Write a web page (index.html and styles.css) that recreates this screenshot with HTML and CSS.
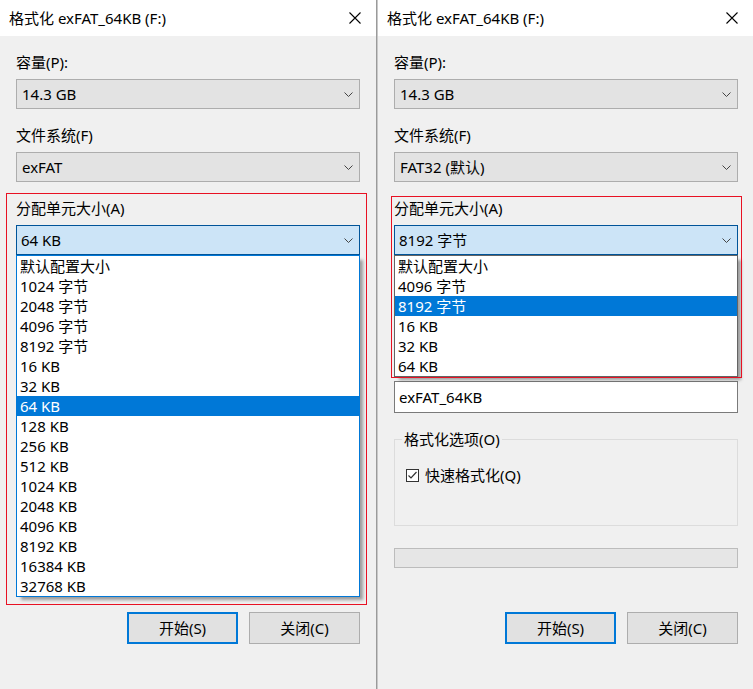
FILE: index.html
```html
<!DOCTYPE html>
<html lang="zh-CN">
<head>
<meta charset="utf-8">
<title>格式化 exFAT_64KB (F:)</title>
<link rel="stylesheet" href="styles.css">
</head>
<body>
<div class="screen">
  <section class="dialog">
    <header class="titlebar">
      <span class="title">格式化 exFAT_64KB (F:)</span>
      <svg class="close" width="12" height="12" viewBox="0 0 12 12"><path d="M0.5 0.5L11.5 11.5M11.5 0.5L0.5 11.5" stroke="#000" stroke-width="1.1" fill="none"/></svg>
    </header>
    <div class="body">
      <div class="field">
        <div class="label">容量(P):</div>
        <div class="select"><span>14.3 GB</span><svg class="chev" width="9" height="5" viewBox="0 0 9 5"><polyline points="0.5,0.5 4.5,4.5 8.5,0.5" fill="none" stroke="#444" stroke-width="1"/></svg></div>
      </div>
      <div class="field">
        <div class="label">文件系统(F)</div>
        <div class="select"><span>exFAT</span><svg class="chev" width="9" height="5" viewBox="0 0 9 5"><polyline points="0.5,0.5 4.5,4.5 8.5,0.5" fill="none" stroke="#444" stroke-width="1"/></svg></div>
      </div>
      <div class="field alloc">
        <div class="label">分配单元大小(A)</div>
        <div class="select focused"><span>64 KB</span><svg class="chev" width="9" height="5" viewBox="0 0 9 5"><polyline points="0.5,0.5 4.5,4.5 8.5,0.5" fill="none" stroke="#444" stroke-width="1"/></svg></div>
        <ul class="dropdown dropdown-blue">
          <li>默认配置大小</li>
          <li>1024 字节</li>
          <li>2048 字节</li>
          <li>4096 字节</li>
          <li>8192 字节</li>
          <li>16 KB</li>
          <li>32 KB</li>
          <li class="selected">64 KB</li>
          <li>128 KB</li>
          <li>256 KB</li>
          <li>512 KB</li>
          <li>1024 KB</li>
          <li>2048 KB</li>
          <li>4096 KB</li>
          <li>8192 KB</li>
          <li>16384 KB</li>
          <li>32768 KB</li>
        </ul>
      </div>
      <div class="covered">
        <button class="restore">还原设备的默认值(D)</button>
        <div class="field vol">
          <div class="label">卷标(L)</div>
          <div class="textbox">exFAT_64KB</div>
        </div>
        <fieldset class="options">
          <legend>格式化选项(O)</legend>
          <label class="check"><span class="box"><svg width="11" height="11" viewBox="0 0 11 11"><polyline points="1.5,5.5 4,8 9.5,2" fill="none" stroke="#333" stroke-width="1.2"/></svg></span>快速格式化(Q)</label>
        </fieldset>
        <div class="progress"></div>
      </div>
      <div class="actions">
        <button class="btn primary">开始(S)</button>
        <button class="btn">关闭(C)</button>
      </div>
    </div>
    <div class="annot annot-left"></div>
  </section>
  <div class="divider"></div>
  <section class="dialog">
    <header class="titlebar">
      <span class="title">格式化 exFAT_64KB (F:)</span>
      <svg class="close" width="12" height="12" viewBox="0 0 12 12"><path d="M0.5 0.5L11.5 11.5M11.5 0.5L0.5 11.5" stroke="#000" stroke-width="1.1" fill="none"/></svg>
    </header>
    <div class="body">
      <div class="field">
        <div class="label">容量(P):</div>
        <div class="select"><span>14.3 GB</span><svg class="chev" width="9" height="5" viewBox="0 0 9 5"><polyline points="0.5,0.5 4.5,4.5 8.5,0.5" fill="none" stroke="#444" stroke-width="1"/></svg></div>
      </div>
      <div class="field">
        <div class="label">文件系统(F)</div>
        <div class="select"><span>FAT32 (默认)</span><svg class="chev" width="9" height="5" viewBox="0 0 9 5"><polyline points="0.5,0.5 4.5,4.5 8.5,0.5" fill="none" stroke="#444" stroke-width="1"/></svg></div>
      </div>
      <div class="field alloc">
        <div class="label">分配单元大小(A)</div>
        <div class="select focused"><span>8192 字节</span><svg class="chev" width="9" height="5" viewBox="0 0 9 5"><polyline points="0.5,0.5 4.5,4.5 8.5,0.5" fill="none" stroke="#444" stroke-width="1"/></svg></div>
        <ul class="dropdown dropdown-gray">
          <li>默认配置大小</li>
          <li>4096 字节</li>
          <li class="selected">8192 字节</li>
          <li>16 KB</li>
          <li>32 KB</li>
          <li>64 KB</li>
        </ul>
      </div>
      <div>
        <button class="restore hidden">还原设备的默认值(D)</button>
        <div class="field vol">
          <div class="label hidden">卷标(L)</div>
          <div class="textbox">exFAT_64KB</div>
        </div>
        <fieldset class="options">
          <legend>格式化选项(O)</legend>
          <label class="check"><span class="box"><svg width="11" height="11" viewBox="0 0 11 11"><polyline points="1.5,5.5 4,8 9.5,2" fill="none" stroke="#333" stroke-width="1.2"/></svg></span>快速格式化(Q)</label>
        </fieldset>
        <div class="progress"></div>
      </div>
      <div class="actions">
        <button class="btn primary">开始(S)</button>
        <button class="btn">关闭(C)</button>
      </div>
    </div>
    <div class="annot annot-right"></div>
  </section>
</div>
</body>
</html>
```

FILE: styles.css
```css
* { box-sizing: border-box; }
html, body { margin: 0; padding: 0; }
body {
  width: 753px;
  height: 689px;
  overflow: hidden;
  background: #f0f0f0;
  font-family: "Noto Sans", "Noto Sans CJK SC", sans-serif;
  font-size: 15px;
  color: #000;
}
.screen {
  display: flex;
  height: 689px;
}
.dialog {
  position: relative;
  width: 376px;
  flex: none;
  height: 689px;
  background: #f0f0f0;
  overflow: hidden;
}
.dialog:last-child { width: 375px; }
.divider {
  width: 2px;
  flex: none;
  background: linear-gradient(to right, #9a9a9a 0 1px, #c8c8c8 1px 2px);
}
.titlebar {
  height: 36px;
  background: #fff;
  display: flex;
  align-items: center;
  justify-content: space-between;
  padding: 0 15px 0 9px;
}
.title { font-size: 15px; line-height: 20px; }
.close { display: block; }
.body {
  padding: 0 16px;
  width: 376px;
}
.dialog:last-child .body { width: 375px; padding-right: 15px; }
.field { margin-top: 16px; }
.alloc { position: relative; z-index: 2; }
.label {
  height: 20px;
  line-height: 20px;
  margin-bottom: 7px;
}
.select {
  height: 30px;
  border: 1px solid #adadad;
  background: #e3e3e3;
  display: flex;
  align-items: center;
  justify-content: space-between;
  padding: 0 6px 0 5px;
  line-height: 20px;
}
.select.focused {
  background: #cce4f7;
  border-color: #005499;
  padding-left: 4px;
}
.chev { display: block; margin-top: 1px; }
.dropdown {
  position: absolute;
  left: 0;
  right: 0;
  top: 100%;
  margin: 0;
  padding: 0;
  list-style: none;
  background: #fff;
  border: 1px solid #0078d7;
  box-shadow: 4px 4px 3px -1px rgba(0, 0, 0, 0.35);
}
.dropdown-gray { border-color: #646464; }
.dropdown li {
  height: 20px;
  line-height: 20px;
  padding-left: 3px;
  white-space: nowrap;
}
.dropdown li.selected {
  background: #0078d7;
  color: #fff;
}
.covered, .hidden { visibility: hidden; }
.restore {
  display: block;
  margin: 14px 0 0 auto;
  height: 30px;
  padding: 0 12px;
  font: inherit;
  background: #e1e1e1;
  border: 1px solid #adadad;
}
.vol { margin-top: 55px; }
.textbox {
  height: 32px;
  border: 1px solid #7a7a7a;
  background: #fff;
  line-height: 30px;
  padding-left: 4px;
}
.options {
  margin: 16px 0 0;
  padding: 0 0 0 10px;
  height: 97px;
  border: 1px solid #dcdcdc;
  min-width: 0;
}
.options legend {
  padding: 0 2px;
  margin-left: -3px;
  line-height: 20px;
  height: 20px;
}
.check {
  display: flex;
  align-items: center;
  margin-top: 16px;
  height: 20px;
  line-height: 20px;
}
.box {
  width: 13px;
  height: 13px;
  border: 1px solid #333;
  background: #fff;
  display: flex;
  align-items: center;
  justify-content: center;
  margin-right: 6px;
  margin-left: 1px;
}
.box svg { display: block; }
.progress {
  margin-top: 22px;
  height: 20px;
  border: 1px solid #bcbcbc;
  background: #e6e6e6;
}
.actions {
  display: flex;
  justify-content: flex-end;
  gap: 11px;
  margin-top: 44px;
}
.btn {
  width: 111px;
  height: 32px;
  font: inherit;
  color: #000;
  background: #e1e1e1;
  border: 1px solid #adadad;
  padding: 0;
  line-height: 20px;
}
.btn.primary { border: 2px solid #0078d7; }
.annot {
  position: absolute;
  border: 1px solid #e81123;
  pointer-events: none;
  z-index: 3;
}
.annot-left { left: 6px; top: 193px; width: 361px; height: 412px; }
.annot-right { left: 13px; top: 196px; width: 351px; height: 182px; }
```
